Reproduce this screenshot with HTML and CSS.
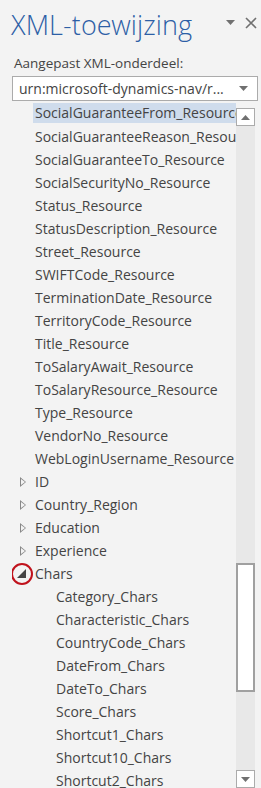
FILE: index.html
```html
<!DOCTYPE html>
<html>
<head>
	<title>XML-toewijzing</title>
	<link rel="stylesheet" href="styles.css">
</head>
<body>
	<div class="pane">
		<div class="pane-header">
			<h1>XML-toewijzing</h1>
			<div class="pane-actions">
				<svg class="pane-menu" width="9" height="6" viewBox="0 0 9 6"><path d="M0 0H9L4.5 5Z" fill="#707070"/></svg>
				<svg class="pane-close" width="12" height="12" viewBox="0 0 12 12"><path d="M1 1L11 11M11 1L1 11" stroke="#707070" stroke-width="1.6"/></svg>
			</div>
		</div>
		<label class="part-label">Aangepast XML-onderdeel:</label>
		<div class="part-select">
			<span>urn:microsoft-dynamics-nav/r...</span>
			<svg width="9" height="6" viewBox="0 0 9 6"><path d="M0 0H9L4.5 5Z" fill="#707070"/></svg>
		</div>
		<div class="tree">
			<ul class="tree-list">
				<li class="node leaf selected">SocialGuaranteeFrom_Resource</li>
				<li class="node leaf">SocialGuaranteeReason_Resource</li>
				<li class="node leaf">SocialGuaranteeTo_Resource</li>
				<li class="node leaf">SocialSecurityNo_Resource</li>
				<li class="node leaf">Status_Resource</li>
				<li class="node leaf">StatusDescription_Resource</li>
				<li class="node leaf">Street_Resource</li>
				<li class="node leaf">SWIFTCode_Resource</li>
				<li class="node leaf">TerminationDate_Resource</li>
				<li class="node leaf">TerritoryCode_Resource</li>
				<li class="node leaf">Title_Resource</li>
				<li class="node leaf">ToSalaryAwait_Resource</li>
				<li class="node leaf">ToSalaryResource_Resource</li>
				<li class="node leaf">Type_Resource</li>
				<li class="node leaf">VendorNo_Resource</li>
				<li class="node leaf">WebLoginUsername_Resource</li>
				<li class="node branch"><span class="twisty closed"></span>ID</li>
				<li class="node branch"><span class="twisty closed"></span>Country_Region</li>
				<li class="node branch"><span class="twisty closed"></span>Education</li>
				<li class="node branch"><span class="twisty closed"></span>Experience</li>
				<li class="node branch"><span class="twisty open"></span>Chars</li>
				<li class="node child">Category_Chars</li>
				<li class="node child">Characteristic_Chars</li>
				<li class="node child">CountryCode_Chars</li>
				<li class="node child">DateFrom_Chars</li>
				<li class="node child">DateTo_Chars</li>
				<li class="node child">Score_Chars</li>
				<li class="node child">Shortcut1_Chars</li>
				<li class="node child">Shortcut10_Chars</li>
				<li class="node child">Shortcut2_Chars</li>
			</ul>
			<div class="scrollbar">
				<div class="scroll-btn up"><svg width="9" height="5" viewBox="0 0 9 5"><path d="M0 5H9L4.5 0Z" fill="#707070"/></svg></div>
				<div class="scroll-track">
					<div class="scroll-thumb"></div>
				</div>
				<div class="scroll-btn down"><svg width="9" height="5" viewBox="0 0 9 5"><path d="M0 0H9L4.5 5Z" fill="#707070"/></svg></div>
			</div>
		</div>
	</div>
</body>
</html>
```

FILE: styles.css
```css
body {
	margin: 0;
	background-color: #f3f3f3;
	font-family: "Open Sans", "Noto Sans", sans-serif;
	color: #444;
	overflow: hidden;
}
.pane {
	width: 261px;
	height: 788px;
	display: flex;
	flex-direction: column;
	overflow: hidden;
}
.pane-header {
	display: flex;
	justify-content: space-between;
	align-items: flex-start;
	padding: 8px 4px 0 11px;
	height: 40px;
	box-sizing: border-box;
}
.pane-header h1 {
	margin: 0;
	font-family: "Open Sans Light", "Lato Light", "Open Sans", sans-serif;
	font-size: 27px;
	font-weight: 300;
	color: #2d5fa6;
	line-height: 34px;
	letter-spacing: 0.1px;
}
.pane-actions {
	display: flex;
	align-items: center;
	gap: 10px;
	padding-top: 9px;
}
.part-label {
	display: block;
	margin: 13px 0 0 14px;
	font-size: 13.5px;
	line-height: 20px;
}
.part-select {
	margin: 3px 3px 0 12px;
	height: 25px;
	border: 1px solid #ababab;
	background-color: #fff;
	display: flex;
	align-items: center;
	justify-content: space-between;
	padding: 0 9px 0 6px;
	box-sizing: border-box;
	font-size: 14px;
}
.tree {
	flex: 1;
	display: flex;
	margin-top: 2px;
	min-height: 0;
}
.tree-list {
	list-style: none;
	margin: 0;
	padding: 0 0 0 12px;
	width: 224px;
	overflow: hidden;
}
.node {
	position: relative;
	height: 23px;
	line-height: 21px;
	font-size: 14px;
	white-space: nowrap;
	overflow: hidden;
}
.leaf {
	padding-left: 23px;
}
.selected {
	background-color: #cfdcec;
	margin-left: 21px;
	padding-left: 2px;
	height: 20px;
	line-height: 20px;
	margin-bottom: 3px;
	margin-top: 0;
}
.branch {
	padding-left: 23px;
}
.child {
	padding-left: 44px;
}
.twisty {
	position: absolute;
	left: 8px;
	top: 6px;
	width: 0;
	height: 0;
}
.twisty.closed {
	border-left: 6px solid #888;
	border-top: 5px solid transparent;
	border-bottom: 5px solid transparent;
}
.twisty.closed::after {
	content: "";
	position: absolute;
	left: -5px;
	top: -3px;
	border-left: 4px solid #f3f3f3;
	border-top: 3px solid transparent;
	border-bottom: 3px solid transparent;
}
.twisty.open {
	left: 0;
	top: 0;
	width: 18px;
	height: 18px;
	border: 2px solid #c0121c;
	border-radius: 50%;
	margin-left: -1px;
}
.twisty.open::after {
	content: "";
	position: absolute;
	left: 4px;
	top: 4px;
	border-right: 9px solid #444;
	border-top: 9px solid transparent;
}
.scrollbar {
	width: 19px;
	margin: 5px 6px 0 0;
	display: flex;
	flex-direction: column;
	background-color: #e8e8e8;
}
.scroll-btn {
	height: 18px;
	flex-shrink: 0;
	background-color: #fff;
	border: 1px solid #ababab;
	box-sizing: border-box;
	display: flex;
	align-items: center;
	justify-content: center;
}
.scroll-track {
	flex: 1;
	padding-top: 437px;
}
.scroll-thumb {
	height: 129px;
	background-color: #fff;
	border: 2px solid #a0a0a0;
	box-sizing: border-box;
}
```
